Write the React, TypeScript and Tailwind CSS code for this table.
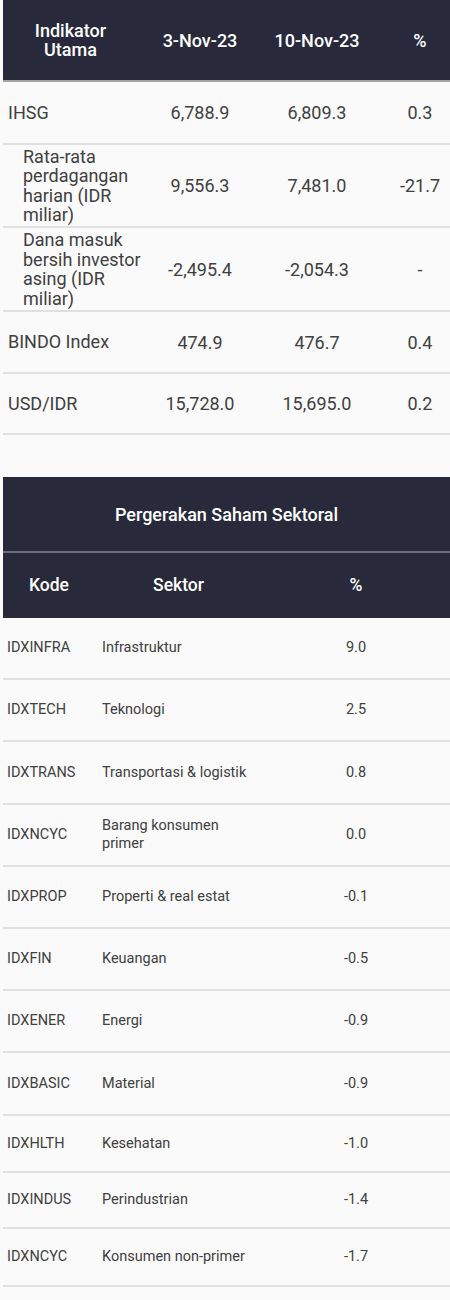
import React from "react";

const indicators = [
  { label: "IHSG", a: "6,788.9", b: "6,809.3", pct: "0.3", h: "h-[63px]", indent: false },
  { label: "Rata-rata perdagangan harian (IDR miliar)", a: "9,556.3", b: "7,481.0", pct: "-21.7", h: "h-[83px]", indent: true },
  { label: "Dana masuk bersih investor asing (IDR miliar)", a: "-2,495.4", b: "-2,054.3", pct: "-", h: "h-[84px]", indent: true },
  { label: "BINDO Index", a: "474.9", b: "476.7", pct: "0.4", h: "h-[62px]", indent: false },
  { label: "USD/IDR", a: "15,728.0", b: "15,695.0", pct: "0.2", h: "h-[61px]", indent: false },
];

const sectors = [
  { code: "IDXINFRA", name: "Infrastruktur", pct: "9.0", h: "h-[62px]" },
  { code: "IDXTECH", name: "Teknologi", pct: "2.5", h: "h-[62px]" },
  { code: "IDXTRANS", name: "Transportasi & logistik", pct: "0.8", h: "h-[63px]" },
  { code: "IDXNCYC", name: "Barang konsumen primer", pct: "0.0", h: "h-[62px]" },
  { code: "IDXPROP", name: "Properti & real estat", pct: "-0.1", h: "h-[62px]" },
  { code: "IDXFIN", name: "Keuangan", pct: "-0.5", h: "h-[62px]" },
  { code: "IDXENER", name: "Energi", pct: "-0.9", h: "h-[62px]" },
  { code: "IDXBASIC", name: "Material", pct: "-0.9", h: "h-[63px]" },
  { code: "IDXHLTH", name: "Kesehatan", pct: "-1.0", h: "h-[57px]" },
  { code: "IDXINDUS", name: "Perindustrian", pct: "-1.4", h: "h-[56px]" },
  { code: "IDXNCYC", name: "Konsumen non-primer", pct: "-1.7", h: "h-[58px]" },
];

export default function App() {
  return (
    <div className="min-h-screen bg-[#fafafa] font-['Roboto',sans-serif] pl-[3px]">
      {/* Indikator utama */}
      <div className="w-[447px]">
        <div className="grid grid-cols-[135px_124px_110px_1fr] h-[82px] items-center bg-[#282a3c] border-b-2 border-[#a3a3a8] text-white text-[18px] font-medium leading-[19px]">
          <div className="text-center">
            Indikator
            <br />
            Utama
          </div>
          <div className="text-center">3-Nov-23</div>
          <div className="text-center">10-Nov-23</div>
          <div className="text-center pl-[18px]">%</div>
        </div>
        {indicators.map((r) => (
          <div
            key={r.label}
            className={`grid grid-cols-[135px_124px_110px_1fr] items-center border-b-2 border-[#e0e0e0] text-[18px] text-[#404040] ${r.h}`}
          >
            <div className={r.indent ? "pl-[20px] w-[142px] leading-[19.5px]" : "pl-[5px] leading-[20px]"}>{r.label}</div>
            <div className="text-center">{r.a}</div>
            <div className="text-center">{r.b}</div>
            <div className="text-center pl-[18px]">{r.pct}</div>
          </div>
        ))}
      </div>

      <div className="h-[42px]" />

      {/* Pergerakan saham sektoral */}
      <div className="w-[447px]">
        <div className="bg-[#282a3c] text-white">
          <div className="h-[76px] flex items-center justify-center border-b-2 border-[#6c6e7c] text-[18px] font-medium">
            Pergerakan Saham Sektoral
          </div>
          <div className="grid grid-cols-[92px_167px_1fr] h-[65px] items-center text-[17.5px] font-medium">
            <div className="text-center">Kode</div>
            <div className="text-center">Sektor</div>
            <div className="text-center">%</div>
          </div>
        </div>
        {sectors.map((s, i) => (
          <div
            key={i}
            className={`grid grid-cols-[92px_167px_1fr] items-center border-b-2 border-[#e0e0e0] text-[14.5px] text-[#404040] leading-[18px] ${s.h}`}
          >
            <div className="pl-[4px]">{s.code}</div>
            <div className="pl-[7px] pr-[4px]">{s.name}</div>
            <div className="text-center">{s.pct}</div>
          </div>
        ))}
      </div>
    </div>
  );
}
